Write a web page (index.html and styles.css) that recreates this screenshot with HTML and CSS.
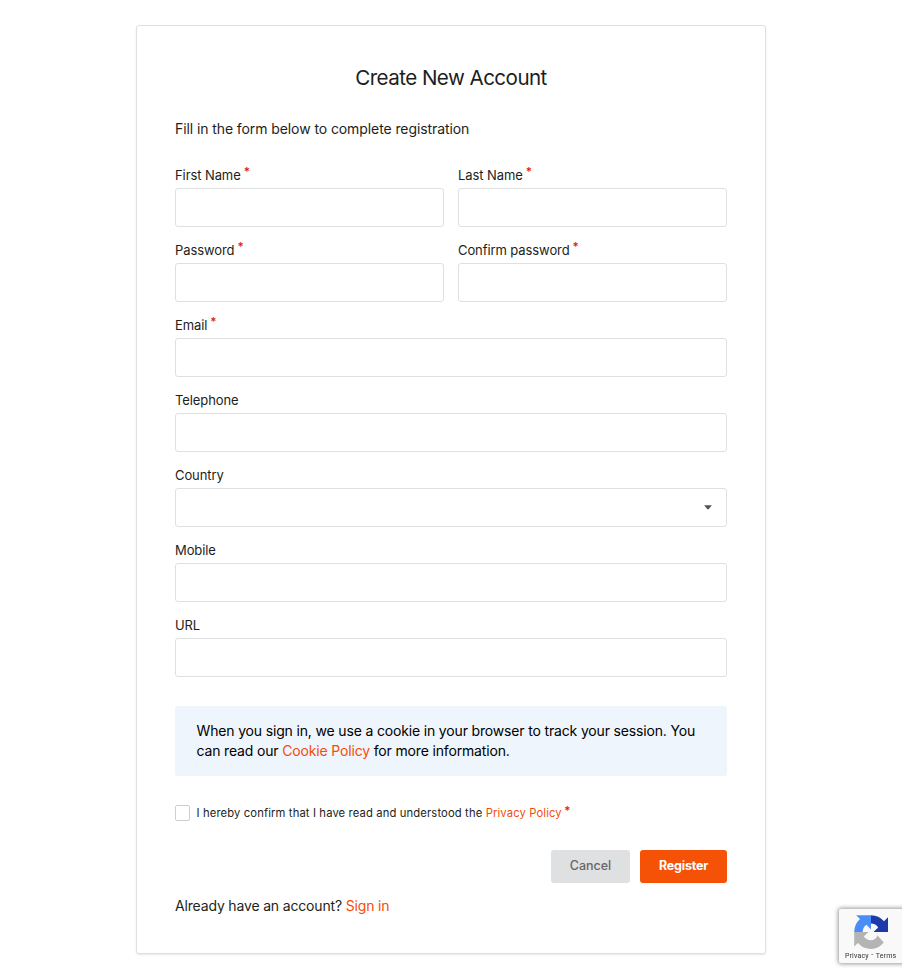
FILE: index.html
```html
<!DOCTYPE html>
<html lang="en">
<head>
<meta charset="utf-8">
<title>Create New Account</title>
<link rel="stylesheet" href="styles.css">
</head>
<body>
<main class="card">
  <h1 class="title"><span>Create New Account</span></h1>
  <p class="intro"><span>Fill in the form below to complete registration</span></p>
  <form class="form">
    <div class="field half"><label for="first"><span>First Name</span><i class="req">*</i></label><input id="first" type="text"></div>
    <div class="field half"><label for="last"><span>Last Name</span><i class="req">*</i></label><input id="last" type="text"></div>
    <div class="field half"><label for="pass"><span>Password</span><i class="req">*</i></label><input id="pass" type="password"></div>
    <div class="field half"><label for="confirm"><span>Confirm password</span><i class="req">*</i></label><input id="confirm" type="password"></div>
    <div class="field"><label for="email"><span>Email</span><i class="req">*</i></label><input id="email" type="email"></div>
    <div class="field"><label for="tel"><span>Telephone</span></label><input id="tel" type="tel"></div>
    <div class="field"><label for="country"><span>Country</span></label>
      <button class="select" id="country" type="button"><svg class="caret" viewBox="0 0 8 5"><path d="M0.1 0.3H7.9L4.8 4.1Q4 4.9 3.2 4.1Z"/></svg></button></div>
    <div class="field"><label for="mobile"><span>Mobile</span></label><input id="mobile" type="tel"></div>
    <div class="field"><label for="url"><span>URL</span></label><input id="url" type="url"></div>
  </form>
  <div class="notice">When you sign in, we use a cookie in your browser to track your session. You<br>can read our <a href="#">Cookie Policy</a> for more information.</div>
  <div class="agree"><input class="check" id="agree" type="checkbox"><label for="agree">I hereby confirm that I have read and understood the <a href="#">Privacy Policy</a></label><i class="req">*</i></div>
  <div class="actions"><button class="btn cancel" type="button">Cancel</button><button class="btn register" type="button">Register</button></div>
  <p class="signin">Already have an account? <a href="#">Sign in</a></p>
</main>
<aside class="badge">
  <svg class="logo" viewBox="0 0 34 34">
    <path fill="#1c3aa9" d="M34 2.2V17H19.5L24.2 12.4Q21.8 8.8 17 8.6V0.2Q25 0.4 30 6.2Z"/>
    <path fill="#4a8df8" d="M17 0.2V14.5L12.4 9.8Q8.9 12.2 8.6 17H0.2Q0.4 9 6 4L2.2 0.2Z"/>
    <path fill="#b4b4b4" d="M0.2 17H14.5L9.8 21.6Q12.4 25.1 17 25.3Q21.4 25.2 23.6 20.5L29.8 27.6Q24.8 33.8 17 34Q9 33.8 4 28L0.2 31.6Z"/>
  </svg>
  <div class="legal"><span>Privacy</span><span class="dash">-</span><span>Terms</span></div>
</aside>
</body>
</html>
```
FILE: styles.css
```css
* { box-sizing: border-box; }
body {
  margin: 0;
  padding-top: 25px;
  height: 976px;
  overflow: hidden;
  background: #fff;
  color: #1d1e20;
  font-family: Inter, "Liberation Sans", sans-serif;
}
a { color: #f54c0a; text-decoration: none; }
.card {
  width: 630px;
  height: 929px;
  margin: 0 auto;
  padding: 38px;
  border: 1px solid #dfe0e1;
  border-radius: 3px;
  box-shadow: 0 1px 2px rgba(0, 0, 0, .1);
}
.title {
  margin: 0;
  font-size: 20.6px;
  line-height: 28px;
  font-weight: 400;
  letter-spacing: -0.55px;
  text-align: center;
}
.intro {
  margin: 26px 0 0;
  font-size: 14px;
  line-height: 22px;
  letter-spacing: -0.09px;
}
.form {
  display: grid;
  grid-template-columns: 1fr 1fr;
  column-gap: 14px;
  row-gap: 13px;
  margin-top: 25px;
}
.field { grid-column: 1 / -1; min-width: 0; }
.half { grid-column: auto; }
.field label {
  display: flex;
  height: 20px;
  margin-bottom: 3px;
  font-size: 13px;
  line-height: 20px;
  letter-spacing: -0.09px;
}
.req {
  margin-left: 3px;
  font-size: 11.5px;
  font-style: normal;
  font-weight: 600;
  line-height: 14px;
  color: #e01b1b;
}
.field input, .select {
  display: block;
  width: 100%;
  height: 39px;
  padding: 0 14px;
  border: 1px solid #dfe0e1;
  border-radius: 3px;
  background: #fff;
  font: inherit;
}
.select {
  display: flex;
  align-items: center;
  justify-content: flex-end;
}
.caret { width: 8px; height: 5px; margin-bottom: 1px; fill: #555; }
.notice {
  height: 70px;
  margin-top: 29px;
  padding: 15px 21.5px;
  border-radius: 3px;
  background: #eef5fc;
  color: #000;
  font-size: 14px;
  line-height: 20px;
  letter-spacing: -0.16px;
  white-space: nowrap;
}
.agree {
  display: flex;
  height: 16px;
  margin-top: 29px;
  font-size: 11.25px;
  line-height: 16px;
  letter-spacing: 0.12px;
  white-space: nowrap;
}
.check {
  appearance: none;
  width: 15px;
  height: 16px;
  margin: 0 6.5px 0 0;
  border: 1px solid #cfcfcf;
  border-radius: 2px;
}
.agree .req { margin-left: 2.5px; line-height: 12px; }
.actions {
  display: flex;
  justify-content: flex-end;
  gap: 10px;
  margin-top: 29px;
}
.btn {
  height: 33px;
  padding: 0 0 2px;
  border: 0;
  border-radius: 3px;
  font: 500 12.5px/20px Inter, "Liberation Sans", sans-serif;
}
.cancel { width: 79px; background: #dfe0e2; color: #666; }
.register { width: 87px; background: #f55207; color: #fff; font-weight: 700; letter-spacing: -0.2px; }
.signin { margin: 12px 0 0; font-size: 14px; line-height: 22px; letter-spacing: -0.165px; }
.badge {
  position: fixed;
  top: 909px;
  left: 839px;
  width: 80px;
  height: 54px;
  padding: 6px 0 0 6px;
  border-radius: 2px;
  background: #f9f9f9;
  box-shadow: 0 0 4px 1px rgba(0, 0, 0, .4);
}
.logo { display: block; width: 34px; height: 34px; margin-left: 9px; }
.legal {
  display: flex;
  margin-top: 3px;
  font: 7px/9px Roboto, sans-serif;
  letter-spacing: 0.15px;
  color: #333;
}
.dash { margin: -1px 2.5px 0; }
```
